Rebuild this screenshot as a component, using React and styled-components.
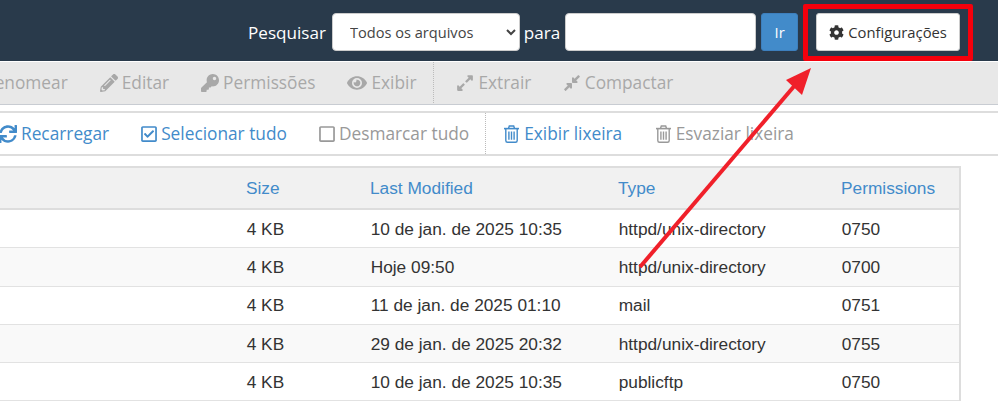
import React from "react";
import styled, { createGlobalStyle } from "styled-components";
import { FaCog, FaPencilAlt, FaKey, FaEye, FaExpandAlt, FaCompressAlt, FaSync, FaRegCheckSquare, FaRegSquare } from "react-icons/fa";

const Global = createGlobalStyle`
  html, body { margin: 0; padding: 0; background: #fff; overflow: hidden; }
  body { width: 998px; height: 401px; font-family: "Open Sans", sans-serif; }
`;
const Page = styled.div`position: relative; width: 998px; height: 401px; overflow: hidden;`;
const Header = styled.header`
  height: 61px; background: #293a4b; display: flex; align-items: center; padding: 3px 38px 0 248px; box-sizing: border-box; color: #fff;
`;
const Label = styled.label`font-size: 17.1px; margin-right: ${p => p.$gap}px;`;
const Select = styled.select`
  width: 188px; height: 38px; margin-right: 4px; border: 1px solid #ccc; border-radius: 4px; background: #fff; color: #444;
  font: 14.6px "Open Sans", sans-serif; padding: 0 8px 0 13px;
`;
const Input = styled.input`
  width: 191px; height: 38px; box-sizing: border-box; border: 1px solid #ccc; border-radius: 4px; background: #fff; margin-right: 5px;
`;
const GoButton = styled.button`
  width: 37px; height: 38px; border: 1px solid #3d7fbd; border-radius: 3px; background: #428bca; color: #fff; font: 14.8px "Open Sans", sans-serif; padding: 0; margin-right: 18px;
`;
const SettingsButton = styled.button`
  width: 144px; height: 38px; border: 1px solid #ccc; border-radius: 3px; background: #fff; color: #333; font: 14.8px "Open Sans", sans-serif; padding: 0;
  display: flex; align-items: center; justify-content: center; gap: 4px;
  svg { width: 15px; height: 15px; }
`;
const Actions = styled.nav`
  height: 43px; margin-top: 1px; box-sizing: border-box; background: #e8e8e8; border-bottom: 1px solid #c8ccd2; display: flex; align-items: stretch; margin-left: -16px; padding-bottom: 1px;
`;
const ActionGroup = styled.div`
  display: flex; align-items: center; gap: ${p => p.$gap || 32}px; padding-right: ${p => p.$end || 17}px;
  padding-left: ${p => p.$start || 0}px;
  border-left: ${p => p.$start ? "1px dotted #bbb" : "none"};
`;
const Action = styled.span`
  display: inline-flex; align-items: center; gap: 4px; font-size: 17.3px; color: ${p => p.$color || "#a8a8a8"}; white-space: nowrap;
  svg { width: ${p => p.$w || p.$icon || 18}px; height: ${p => p.$icon || 18}px; flex: none; }
`;
const Tools = styled.nav`
  height: 45px; margin-top: 6px; box-sizing: border-box; border-top: 2px solid #ddd; border-bottom: 2px solid #ddd; display: flex; align-items: stretch; margin-left: -1px;
`;
const Table = styled.div`
  margin: 10px 0 0 -1px; width: 962px; border-top: 2px solid #ddd; border-right: 2px solid #ddd; box-sizing: border-box;
`;
const Row = styled.div`
  display: grid; grid-template-columns: 239px 124px 248px 223px 1fr; height: ${p => p.$head ? 42 : 38.3}px; box-sizing: border-box; align-items: center; padding-top: 1px;
  background: ${p => p.$head ? "#f1f1f1" : p.$odd ? "#f9f9f9" : "#fff"}; border-bottom: ${p => p.$head ? 2 : 1.5}px solid ${p => p.$head ? "#ddd" : "#e2e2e2"};
  font: 17.3px "Liberation Sans", Arial, sans-serif; color: #333;
`;
const Cell = styled.div`padding-left: ${p => p.$head ? 8 : 8.7}px; white-space: nowrap; color: ${p => p.$head ? "#428bca" : "#333"};`;
const Highlight = styled.div`
  position: absolute; left: 803px; top: 4px; width: 170px; height: 57px; box-sizing: border-box; border: 5px solid #f5000c; border-radius: 2px; pointer-events: none;
`;
const Arrow = styled.svg`position: absolute; left: 0; top: 0; pointer-events: none;`;

const TrashIcon = () => (
  <svg viewBox="0 0 16 18" fill="none" stroke="currentColor" strokeWidth="1.4">
    <path d="M5 3.5 L5.8 1 H10.2 L11 3.5" />
    <path d="M0.5 3.6 H15.5" strokeWidth="1.6" />
    <path d="M2.3 4 V15.4 Q2.3 17.2 4 17.2 H12 Q13.7 17.2 13.7 15.4 V4" />
    <path d="M5.4 6.5 V14.8 M8 6.5 V14.8 M10.6 6.5 V14.8" />
  </svg>
);

const rows = [
  ["4 KB", "10 de jan. de 2025 10:35", "httpd/unix-directory", "0750"],
  ["4 KB", "Hoje 09:50", "httpd/unix-directory", "0700"],
  ["4 KB", "11 de jan. de 2025 01:10", "mail", "0751"],
  ["4 KB", "29 de jan. de 2025 20:32", "httpd/unix-directory", "0755"],
  ["4 KB", "10 de jan. de 2025 10:35", "publicftp", "0750"],
];
const blue = "#428bca";

export default function App() {
  return (
    <Page>
      <Global />
      <Header>
        <Label $gap={6}>Pesquisar</Label>
        <Select defaultValue="all"><option value="all">Todos os arquivos</option></Select>
        <Label $gap={5}>para</Label>
        <Input />
        <GoButton>Ir</GoButton>
        <SettingsButton><FaCog />Configurações</SettingsButton>
      </Header>
      <Actions>
        <ActionGroup>
          <Action>Renomear</Action>
          <Action><FaPencilAlt />Editar</Action>
          <Action><FaKey />Permissões</Action>
          <Action $icon={20}><FaEye />Exibir</Action>
        </ActionGroup>
        <ActionGroup $gap={31.4} $start={22}>
          <Action><FaExpandAlt />Extrair</Action>
          <Action><FaCompressAlt />Compactar</Action>
        </ActionGroup>
      </Actions>
      <Tools>
        <ActionGroup $end={16}>
          <Action $color={blue}><FaSync />Recarregar</Action>
          <Action $color={blue} $w={16}><FaRegCheckSquare />Selecionar tudo</Action>
          <Action $color="#999" $w={16}><FaRegSquare />Desmarcar tudo</Action>
        </ActionGroup>
        <ActionGroup $gap={32.5} $start={17}>
          <Action $color={blue} $w={17}><TrashIcon />Exibir lixeira</Action>
          <Action $color="#999" $w={17}><TrashIcon />Esvaziar lixeira</Action>
        </ActionGroup>
      </Tools>
      <Table>
        <Row $head>
          <Cell />
          <Cell $head>Size</Cell><Cell $head>Last Modified</Cell><Cell $head>Type</Cell><Cell $head>Permissions</Cell>
        </Row>
        {rows.map((r, i) => (
          <Row key={i} $odd={i % 2 === 1}>
            <Cell />
            {r.map((c, j) => <Cell key={j}>{c}</Cell>)}
          </Row>
        ))}
      </Table>
      <Highlight />
      <Arrow width="998" height="401" viewBox="0 0 998 401">
        <line x1="640" y1="267" x2="796" y2="84" stroke="#f0202a" strokeWidth="4" />
        <polygon points="811,68 786,80 802,95" fill="#f0202a" />
      </Arrow>
    </Page>
  );
}
